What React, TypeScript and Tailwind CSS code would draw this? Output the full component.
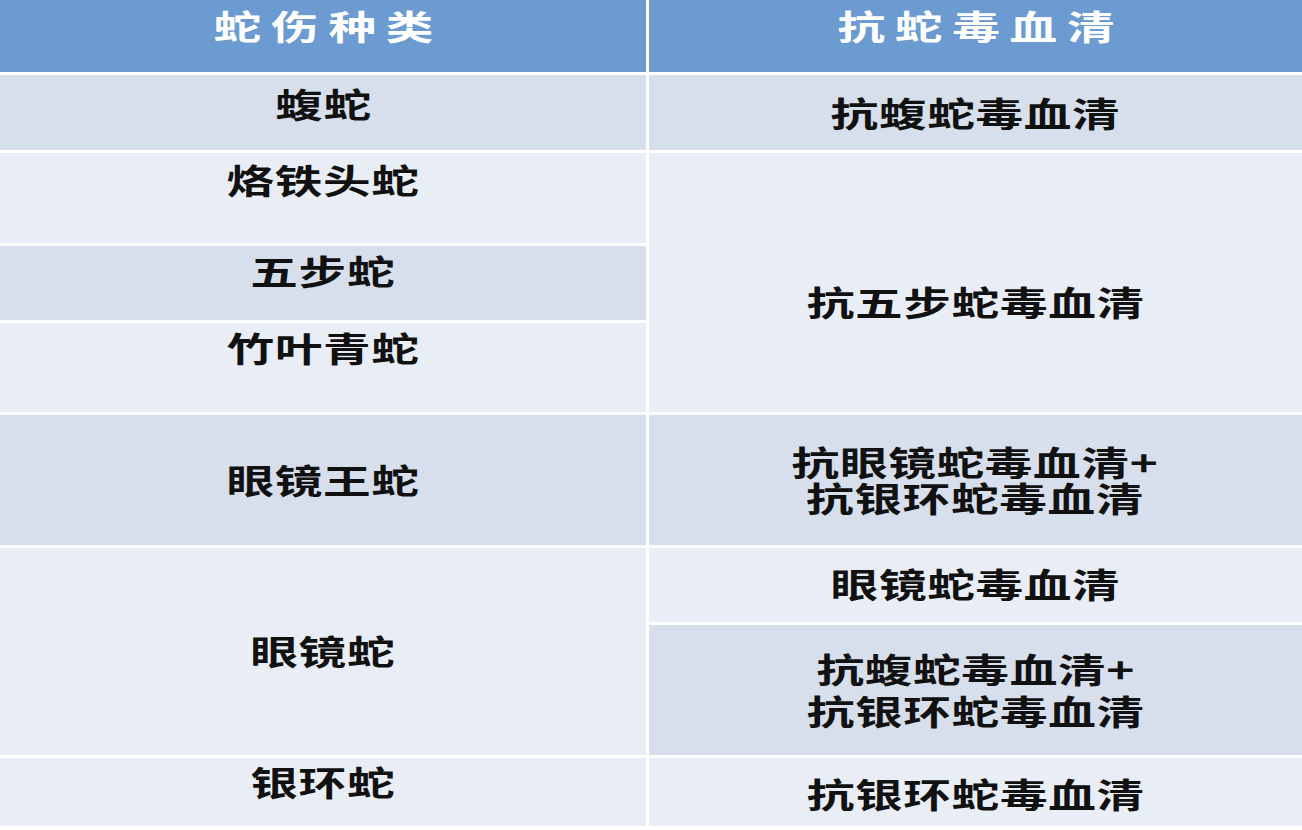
import React from "react"

const font = { fontFamily: '"Noto Sans CJK SC", "Noto Sans", sans-serif' }

const dark = "bg-[#d6dfeb]"
const light = "bg-[#e9eef6]"

function Cell({
  lines,
  className = "",
}: {
  lines: string[]
  className?: string
}) {
  return (
    <div
      className={`flex flex-col items-center text-[34px] leading-[36px] font-bold text-[#111] tracking-[0.5px] ${className}`}
    >
      <span className="inline-block scale-x-[1.4] whitespace-nowrap text-center">
        {lines.map((l, i) => (
          <React.Fragment key={l}>
            {i > 0 && <br />}
            {l}
          </React.Fragment>
        ))}
      </span>
    </div>
  )
}

function Head({ text }: { text: string }) {
  return (
    <div className="bg-[#6b9bd0] flex items-center justify-center pb-[20px] text-white text-[34px] leading-[36px] font-bold">
      <span className="inline-block scale-x-[1.4] tracking-[7px] pl-[7px] whitespace-nowrap">{text}</span>
    </div>
  )
}

export default function App() {
  return (
    <div className="w-[1302px] h-[830px] bg-white overflow-hidden" style={font}>
      <div className="grid grid-cols-[646px_1fr] grid-rows-[72px_75px_90px_74px_89px_130px_74px_130px_68px] gap-[3px]">
        {/* Header */}
        <Head text="蛇伤种类" />
        <Head text="抗蛇毒血清" />

        {/* 蝮蛇 */}
        <Cell lines={["蝮蛇"]} className={`${dark} pt-[11px] col-start-1 row-start-2`} />
        <Cell lines={["抗蝮蛇毒血清"]} className={`${dark} justify-center col-start-2 row-start-2`} />

        {/* 五步蛇 group */}
        <Cell lines={["烙铁头蛇"]} className={`${light} pt-[9px] col-start-1 row-start-3`} />
        <Cell lines={["五步蛇"]} className={`${dark} pt-[7px] col-start-1 row-start-4`} />
        <Cell lines={["竹叶青蛇"]} className={`${light} pt-[7px] col-start-1 row-start-5`} />
        <Cell
          lines={["抗五步蛇毒血清"]}
          className={`${light} justify-center pt-[38px] col-start-2 row-start-3 row-span-3`}
        />

        {/* 眼镜王蛇 */}
        <Cell lines={["眼镜王蛇"]} className={`${dark} justify-center pb-[1px] col-start-1 row-start-6`} />
        <Cell
          lines={["抗眼镜蛇毒血清+", "抗银环蛇毒血清"]}
          className={`${dark} justify-center pb-[1px] leading-[35px] col-start-2 row-start-6`}
        />

        {/* 眼镜蛇 */}
        <Cell lines={["眼镜蛇"]} className={`${light} justify-center pb-[2px] col-start-1 row-start-7 row-span-2`} />
        <Cell lines={["眼镜蛇毒血清"]} className={`${light} justify-center pb-[2px] col-start-2 row-start-7`} />
        <Cell
          lines={["抗蝮蛇毒血清+", "抗银环蛇毒血清"]}
          className={`${dark} justify-center pb-[1px] leading-[42px] col-start-2 row-start-8`}
        />

        {/* 银环蛇 */}
        <Cell lines={["银环蛇"]} className={`${light} pt-[6px] col-start-1 row-start-9`} />
        <Cell lines={["抗银环蛇毒血清"]} className={`${light} justify-center pt-[4px] col-start-2 row-start-9`} />
      </div>
    </div>
  )
}
